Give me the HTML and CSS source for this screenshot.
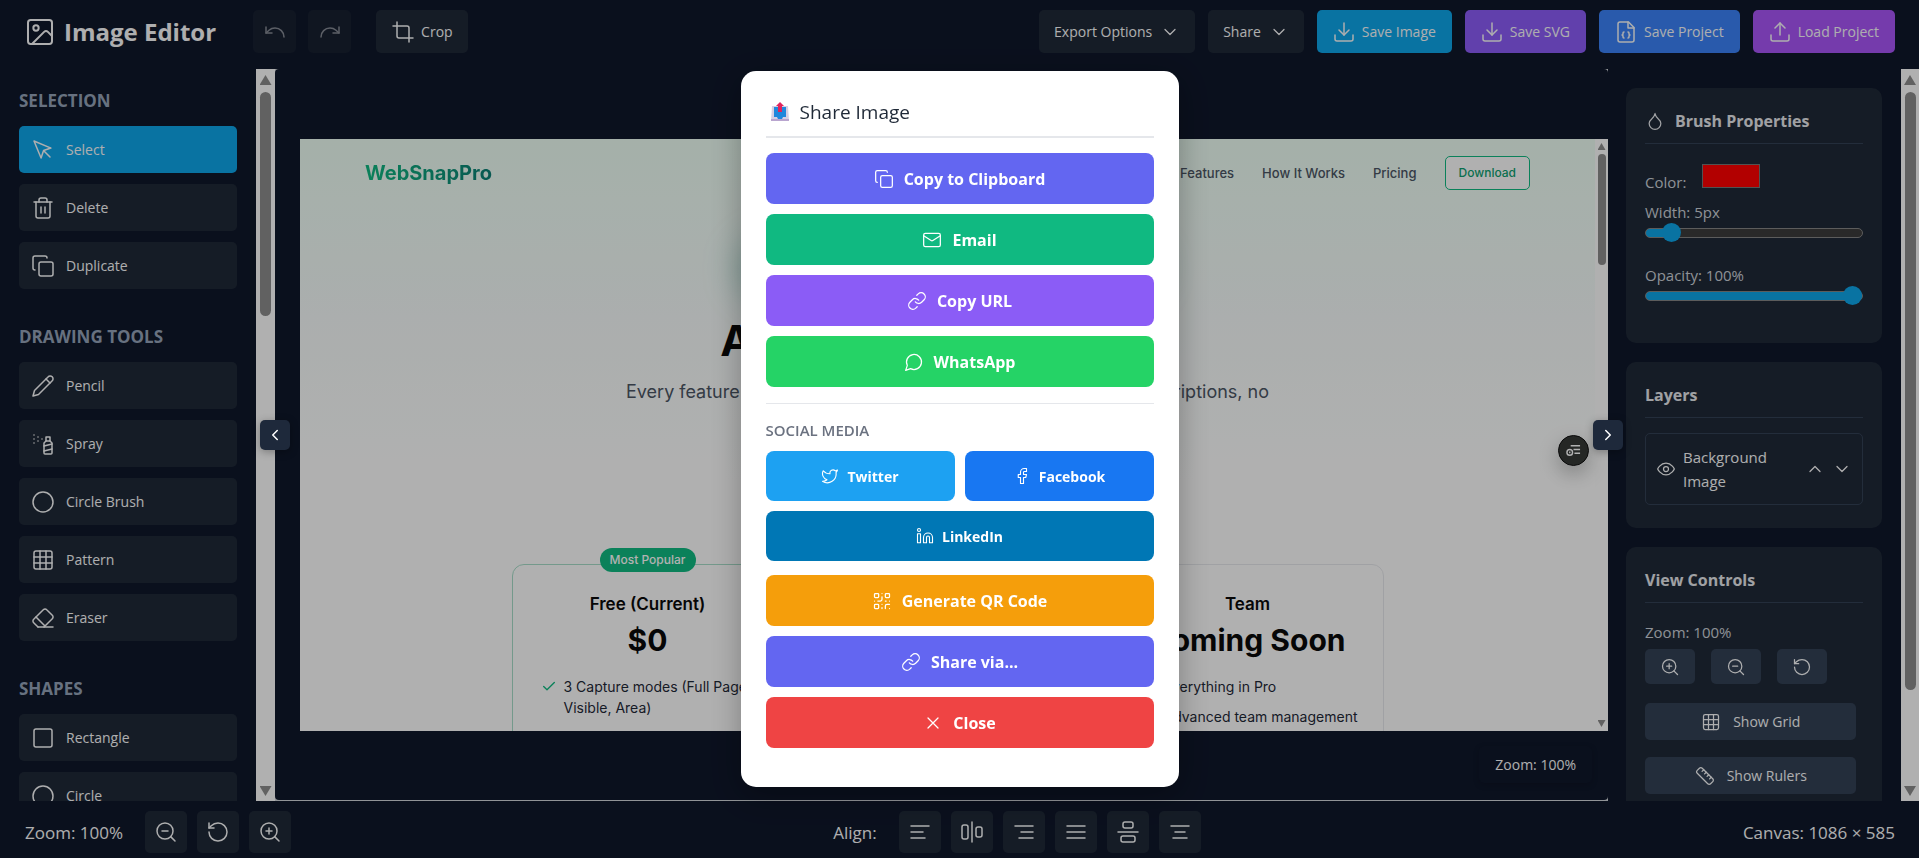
FILE: index.html
```html
<!DOCTYPE html>
<html lang="en">
<head>
    <meta charset="UTF-8">
    <meta name="viewport" content="width=device-width, initial-scale=1.0">
    <title>Image Editor</title>
    <link rel="stylesheet" href="styles.css">
</head>
<body>
    <!-- Icon set -->
    <svg class="sprite" aria-hidden="true">
        <symbol id="i-image" viewBox="0 0 24 24"><rect x="3" y="3" width="18" height="18" rx="2"/><circle cx="9" cy="9" r="2"/><path d="m21 15-3.086-3.086a2 2 0 0 0-2.828 0L6 21"/></symbol>
        <symbol id="i-undo" viewBox="0 0 24 24"><path d="M3 7v6h6"/><path d="M21 17a9 9 0 0 0-9-9 9 9 0 0 0-6 2.3L3 13"/></symbol>
        <symbol id="i-redo" viewBox="0 0 24 24"><path d="M21 7v6h-6"/><path d="M3 17a9 9 0 0 1 9-9 9 9 0 0 1 6 2.3l3 2.7"/></symbol>
        <symbol id="i-crop" viewBox="0 0 24 24"><path d="M6 2v14a2 2 0 0 0 2 2h14"/><path d="M18 22V8a2 2 0 0 0-2-2H2"/></symbol>
        <symbol id="i-down" viewBox="0 0 24 24"><path d="m6 9 6 6 6-6"/></symbol>
        <symbol id="i-up" viewBox="0 0 24 24"><path d="m18 15-6-6-6 6"/></symbol>
        <symbol id="i-left" viewBox="0 0 24 24"><path d="m15 18-6-6 6-6"/></symbol>
        <symbol id="i-right" viewBox="0 0 24 24"><path d="m9 18 6-6-6-6"/></symbol>
        <symbol id="i-download" viewBox="0 0 24 24"><path d="M21 15v4a2 2 0 0 1-2 2H5a2 2 0 0 1-2-2v-4"/><path d="m7 10 5 5 5-5"/><path d="M12 15V3"/></symbol>
        <symbol id="i-upload" viewBox="0 0 24 24"><path d="M21 15v4a2 2 0 0 1-2 2H5a2 2 0 0 1-2-2v-4"/><path d="m17 8-5-5-5 5"/><path d="M12 3v12"/></symbol>
        <symbol id="i-json" viewBox="0 0 24 24"><path d="M14.5 2H6a2 2 0 0 0-2 2v16a2 2 0 0 0 2 2h12a2 2 0 0 0 2-2V7.500L14.5 2z"/><path d="M14 2v6h6"/><path d="M10 12a1 1 0 0 0-1 1v1a1 1 0 0 1-1 1 1 1 0 0 1 1 1v1a1 1 0 0 0 1 1"/><path d="M14 18a1 1 0 0 0 1-1v-1a1 1 0 0 1 1-1 1 1 0 0 1-1-1v-1a1 1 0 0 0-1-1"/></symbol>
        <symbol id="i-pointer" viewBox="0 0 24 24"><path d="m3 3 7.070 16.970 2.510-7.390 7.390-2.510L3 3z"/><path d="m13 13 6 6"/></symbol>
        <symbol id="i-trash" viewBox="0 0 24 24"><path d="M3 6h18"/><path d="M19 6v14a2 2 0 0 1-2 2H7a2 2 0 0 1-2-2V6"/><path d="M8 6V4a2 2 0 0 1 2-2h4a2 2 0 0 1 2 2v2"/><path d="M10 11v6"/><path d="M14 11v6"/></symbol>
        <symbol id="i-copy" viewBox="0 0 24 24"><rect x="8" y="8" width="14" height="14" rx="2"/><path d="M4 16a2 2 0 0 1-2-2V4a2 2 0 0 1 2-2h10a2 2 0 0 1 2 2"/></symbol>
        <symbol id="i-pencil" viewBox="0 0 24 24"><path d="M17 3a2.850 2.830 0 1 1 4 4L7.500 20.500 2 22l1.500-5.500Z"/><path d="m15 5 4 4"/></symbol>
        <symbol id="i-spray" viewBox="0 0 24 24"><path d="M3 3h.01M7 5h.01M11 7h.01M3 7h.01M7 9h.01M3 11h.01"/><rect x="15" y="5" width="4" height="4"/><path d="m19 9 2 2v10c0 .6-.4 1-1 1h-6c-.6 0-1-.4-1-1V11l2-2"/><path d="m13 14 8-2"/><path d="m13 19 8-2"/></symbol>
        <symbol id="i-circle" viewBox="0 0 24 24"><circle cx="12" cy="12" r="10"/></symbol>
        <symbol id="i-square" viewBox="0 0 24 24"><rect x="3" y="3" width="18" height="18" rx="2"/></symbol>
        <symbol id="i-grid" viewBox="0 0 24 24"><rect x="3" y="3" width="18" height="18" rx="2"/><path d="M3 9h18M3 15h18M9 3v18M15 3v18"/></symbol>
        <symbol id="i-eraser" viewBox="0 0 24 24"><path d="m7 21-4.300-4.300c-1-1-1-2.500 0-3.400l9.600-9.600c1-1 2.500-1 3.400 0l5.600 5.600c1 1 1 2.500 0 3.400L13 21"/><path d="M22 21H7"/><path d="m5 11 9 9"/></symbol>
        <symbol id="i-zoom-out" viewBox="0 0 24 24"><circle cx="11" cy="11" r="8"/><path d="m21 21-4.350-4.350"/><path d="M8 11h6"/></symbol>
        <symbol id="i-zoom-in" viewBox="0 0 24 24"><circle cx="11" cy="11" r="8"/><path d="m21 21-4.350-4.350"/><path d="M8 11h6M11 8v6"/></symbol>
        <symbol id="i-reset" viewBox="0 0 24 24"><path d="M3 12a9 9 0 1 0 9-9 9.750 9.750 0 0 0-6.740 2.740L3 8"/><path d="M3 3v5h5"/></symbol>
        <symbol id="i-drop" viewBox="0 0 24 24"><path d="M12 22a7 7 0 0 0 7-7c0-2-1-3.900-3-5.500s-3.500-4-4-6.500c-.5 2.500-2 4.900-4 6.500C6 11.100 5 13 5 15a7 7 0 0 0 7 7z"/></symbol>
        <symbol id="i-eye" viewBox="0 0 24 24"><path d="M2 12s3-7 10-7 10 7 10 7-3 7-10 7-10-7-10-7Z"/><circle cx="12" cy="12" r="3"/></symbol>
        <symbol id="i-ruler" viewBox="0 0 24 24"><path d="M21.3 15.3a2.400 2.400 0 0 1 0 3.400l-2.600 2.600a2.400 2.400 0 0 1-3.400 0L2.700 8.700a2.410 2.410 0 0 1 0-3.400l2.600-2.600a2.410 2.410 0 0 1 3.400 0Z"/><path d="m14.5 12.5 2-2M11.5 9.500l2-2M8.500 6.500l2-2M17.5 15.5l2-2"/></symbol>
        <symbol id="i-mail" viewBox="0 0 24 24"><rect x="2" y="4" width="20" height="16" rx="2"/><path d="m22 7-8.970 5.700a1.940 1.940 0 0 1-2.060 0L2 7"/></symbol>
        <symbol id="i-link" viewBox="0 0 24 24"><path d="M10 13a5 5 0 0 0 7.540.54l3-3a5 5 0 0 0-7.070-7.070l-1.720 1.710"/><path d="M14 11a5 5 0 0 0-7.540-.54l-3 3a5 5 0 0 0 7.070 7.070l1.710-1.710"/></symbol>
        <symbol id="i-chat" viewBox="0 0 24 24"><path d="M7.900 20A9 9 0 1 0 4 16.100L2 22Z"/></symbol>
        <symbol id="i-twitter" viewBox="0 0 24 24"><path d="M22 4s-.7 2.100-2 3.400c1.600 10-9.400 17.300-18 11.600 2.200.1 4.400-.6 6-2C3 15.500.5 9.600 3 5c2.200 2.600 5.600 4.100 9 4-.9-4.200 4-6.600 7-3.800 1.100 0 3-1.200 3-1.200z"/></symbol>
        <symbol id="i-facebook" viewBox="0 0 24 24"><path d="M18 2h-3a5 5 0 0 0-5 5v3H7v4h3v8h4v-8h3l1-4h-4V7a1 1 0 0 1 1-1h3z"/></symbol>
        <symbol id="i-linkedin" viewBox="0 0 24 24"><path d="M16 8a6 6 0 0 1 6 6v7h-4v-7a2 2 0 0 0-4 0v7h-4v-7a6 6 0 0 1 6-6z"/><rect x="2" y="9" width="4" height="12"/><circle cx="4" cy="4" r="2"/></symbol>
        <symbol id="i-qr" viewBox="0 0 24 24"><rect x="3" y="3" width="5" height="5" rx="1"/><rect x="16" y="3" width="5" height="5" rx="1"/><rect x="3" y="16" width="5" height="5" rx="1"/><path d="M21 16h-3a2 2 0 0 0-2 2v3M21 21v.01M12 7v3a2 2 0 0 1-2 2H7M3 12h.01M12 3h.01M12 16v.01M16 12h1M21 12v.01M12 21v-1"/></symbol>
        <symbol id="i-x" viewBox="0 0 24 24"><path d="M18 6 6 18M6 6l12 12"/></symbol>
        <symbol id="i-check" viewBox="0 0 24 24"><path d="M20 6 9 17l-5-5"/></symbol>
        <symbol id="i-al-left" viewBox="0 0 24 24"><path d="M3 6h18M3 12h12M3 18h14"/></symbol>
        <symbol id="i-al-right" viewBox="0 0 24 24"><path d="M3 6h18M9 12h12M7 18h14"/></symbol>
        <symbol id="i-al-justify" viewBox="0 0 24 24"><path d="M3 6h18M3 12h18M3 18h18"/></symbol>
        <symbol id="i-al-center" viewBox="0 0 24 24"><path d="M3 6h18M7 12h10M5 18h14"/></symbol>
        <symbol id="i-al-h" viewBox="0 0 24 24"><rect x="2" y="5" width="6" height="14" rx="2"/><rect x="16" y="7" width="6" height="10" rx="2"/><path d="M12 2v20"/></symbol>
        <symbol id="i-al-v" viewBox="0 0 24 24"><rect x="5" y="16" width="14" height="6" rx="2"/><rect x="7" y="2" width="10" height="6" rx="2"/><path d="M2 12h20"/></symbol>
    </svg>

    <header class="topbar">
        <h1 class="brand"><svg class="icon brand-icon"><use href="#i-image"/></svg>Image Editor</h1>
        <div class="history">
            <button class="btn btn-square" disabled aria-label="Undo"><svg class="icon"><use href="#i-undo"/></svg></button>
            <button class="btn btn-square" disabled aria-label="Redo"><svg class="icon"><use href="#i-redo"/></svg></button>
        </div>
        <button class="btn"><svg class="icon"><use href="#i-crop"/></svg>Crop</button>
        <div class="actions">
            <button class="btn btn-menu">Export Options<svg class="icon icon-sm"><use href="#i-down"/></svg></button>
            <button class="btn btn-menu">Share<svg class="icon icon-sm"><use href="#i-down"/></svg></button>
            <button class="btn btn-sky"><svg class="icon"><use href="#i-download"/></svg>Save Image</button>
            <button class="btn btn-violet"><svg class="icon"><use href="#i-download"/></svg>Save SVG</button>
            <button class="btn btn-blue"><svg class="icon"><use href="#i-json"/></svg>Save Project</button>
            <button class="btn btn-purple"><svg class="icon"><use href="#i-upload"/></svg>Load Project</button>
        </div>
    </header>

    <main class="workspace">
        <aside class="sidebar">
            <div class="tools">
                <section class="tool-group">
                    <h2>SELECTION</h2>
                    <button class="tool active"><svg class="icon"><use href="#i-pointer"/></svg>Select</button>
                    <button class="tool"><svg class="icon"><use href="#i-trash"/></svg>Delete</button>
                    <button class="tool"><svg class="icon"><use href="#i-copy"/></svg>Duplicate</button>
                </section>
                <section class="tool-group">
                    <h2>DRAWING TOOLS</h2>
                    <button class="tool"><svg class="icon"><use href="#i-pencil"/></svg>Pencil</button>
                    <button class="tool"><svg class="icon"><use href="#i-spray"/></svg>Spray</button>
                    <button class="tool"><svg class="icon"><use href="#i-circle"/></svg>Circle Brush</button>
                    <button class="tool"><svg class="icon"><use href="#i-grid"/></svg>Pattern</button>
                    <button class="tool"><svg class="icon"><use href="#i-eraser"/></svg>Eraser</button>
                </section>
                <section class="tool-group">
                    <h2>SHAPES</h2>
                    <button class="tool"><svg class="icon"><use href="#i-square"/></svg>Rectangle</button>
                    <button class="tool"><svg class="icon"><use href="#i-circle"/></svg>Circle</button>
                </section>
            </div>
            <div class="scrollbar"><i class="arrow-up"></i><i class="thumb thumb-left"></i><i class="arrow-down"></i></div>
        </aside>

        <div class="stage">
            <button class="toggle toggle-left" aria-label="Hide tools"><svg class="icon"><use href="#i-left"/></svg></button>
            <button class="toggle toggle-right" aria-label="Hide properties"><svg class="icon"><use href="#i-right"/></svg></button>
            <div class="canvas">
                <!-- Loaded picture -->
                <div class="snap">
                    <div class="snap-page">
                        <div class="snap-glow"></div>
                        <div class="snap-nav">
                            <strong class="snap-logo">WebSnapPro</strong>
                            <span>Features</span>
                            <span>How It Works</span>
                            <span>Pricing</span>
                            <span class="snap-download">Download</span>
                        </div>
                        <div class="snap-title">All Features, One App</div>
                        <p class="snap-lead">Every feature you need to capture and share it. No hidden subscriptions, no</p>
                        <div class="plans">
                            <div class="plan plan-free">
                                <span class="plan-badge">Most Popular</span>
                                <h3>Free (Current)</h3>
                                <div class="price">$0</div>
                                <ul>
                                    <li><svg class="icon"><use href="#i-check"/></svg>3 Capture modes (Full Page, Visible, Area)</li>
                                </ul>
                            </div>
                            <div class="plan">
                                <h3>Pro</h3>
                            </div>
                            <div class="plan">
                                <h3>Team</h3>
                                <div class="price">Coming Soon</div>
                                <ul>
                                    <li><svg class="icon"><use href="#i-check"/></svg>Everything in Pro</li>
                                    <li><svg class="icon"><use href="#i-check"/></svg>Advanced team management</li>
                                </ul>
                            </div>
                        </div>
                    </div>
                    <div class="scrollbar scrollbar-thin"><i class="arrow-up"></i><i class="thumb thumb-snap"></i><i class="arrow-down"></i></div>
                    <div class="snap-fab">
                        <svg viewBox="0 0 16 16"><path d="M5 3h10M8 7h7M9 11h6"/><circle cx="4" cy="10" r="3"/><path d="M4 9v2"/></svg>
                    </div>
                </div>
                <div class="zoom-tag">Zoom: 100%</div>
            </div>
        </div>

        <aside class="props">
            <div class="cards">
                <section class="card">
                    <h3><svg class="icon icon-sm"><use href="#i-drop"/></svg>Brush Properties</h3>
                    <div class="color-row">
                        <label for="color">Color:</label>
                        <input type="color" id="color" value="#ff0000">
                    </div>
                    <div class="field">
                        <label for="width">Width: 5px</label>
                        <input type="range" id="width" class="range-width" min="1" max="50" value="5">
                    </div>
                    <div class="field">
                        <label for="opacity">Opacity: 100%</label>
                        <input type="range" id="opacity" class="range-opacity" min="0" max="100" value="100">
                    </div>
                </section>
                <section class="card">
                    <h3>Layers</h3>
                    <div class="layer">
                        <svg class="icon icon-sm"><use href="#i-eye"/></svg>
                        <span>Background Image</span>
                        <button aria-label="Move up"><svg class="icon icon-sm"><use href="#i-up"/></svg></button>
                        <button aria-label="Move down"><svg class="icon icon-sm"><use href="#i-down"/></svg></button>
                    </div>
                </section>
                <section class="card">
                    <h3>View Controls</h3>
                    <div class="view-label">Zoom: 100%</div>
                    <div class="view-zoom">
                        <button aria-label="Zoom in"><svg class="icon icon-sm"><use href="#i-zoom-in"/></svg></button>
                        <button aria-label="Zoom out"><svg class="icon icon-sm"><use href="#i-zoom-out"/></svg></button>
                        <button aria-label="Reset zoom"><svg class="icon icon-sm"><use href="#i-reset"/></svg></button>
                    </div>
                    <button class="view-btn"><svg class="icon icon-sm"><use href="#i-grid"/></svg>Show Grid</button>
                    <button class="view-btn"><svg class="icon icon-sm"><use href="#i-ruler"/></svg>Show Rulers</button>
                </section>
            </div>
            <div class="scrollbar"><i class="arrow-up"></i><i class="thumb thumb-right"></i><i class="arrow-down"></i></div>
        </aside>
    </main>

    <footer class="statusbar">
        <div class="status-group">
            <span class="status-zoom">Zoom: 100%</span>
            <button aria-label="Zoom out"><svg class="icon"><use href="#i-zoom-out"/></svg></button>
            <button aria-label="Reset zoom"><svg class="icon"><use href="#i-reset"/></svg></button>
            <button aria-label="Zoom in"><svg class="icon"><use href="#i-zoom-in"/></svg></button>
        </div>
        <div class="status-group">
            <span class="status-align">Align:</span>
            <button aria-label="Align left"><svg class="icon"><use href="#i-al-left"/></svg></button>
            <button aria-label="Align center"><svg class="icon"><use href="#i-al-h"/></svg></button>
            <button aria-label="Align right"><svg class="icon"><use href="#i-al-right"/></svg></button>
            <button aria-label="Align top"><svg class="icon"><use href="#i-al-justify"/></svg></button>
            <button aria-label="Align middle"><svg class="icon"><use href="#i-al-v"/></svg></button>
            <button aria-label="Align bottom"><svg class="icon"><use href="#i-al-center"/></svg></button>
        </div>
        <span>Canvas: 1086 × 585</span>
    </footer>

    <div class="overlay">
        <div class="modal" role="dialog" aria-labelledby="share-title">
            <h2 id="share-title">
                <svg class="tray" viewBox="0 0 20 20"><path fill="#d5cfe4" d="M2 4h16l1 15H1z"/><path fill="#b9a5cf" d="M1 17h18v2H1z"/><path fill="#1f87dc" d="M4 5h12v10h-3l-1 2H8l-1-2H4z"/><path fill="#e0245e" d="m10 0 4 4h-2v6H8V4H6z"/></svg>
                Share Image
            </h2>
            <button class="share s-indigo"><svg class="icon"><use href="#i-copy"/></svg>Copy to Clipboard</button>
            <button class="share s-green"><svg class="icon"><use href="#i-mail"/></svg>Email</button>
            <button class="share s-violet"><svg class="icon"><use href="#i-link"/></svg>Copy URL</button>
            <button class="share s-whatsapp"><svg class="icon"><use href="#i-chat"/></svg>WhatsApp</button>
            <div class="social">
                <h3>SOCIAL MEDIA</h3>
                <div class="social-grid">
                    <button class="share s-twitter"><svg class="icon"><use href="#i-twitter"/></svg>Twitter</button>
                    <button class="share s-facebook"><svg class="icon"><use href="#i-facebook"/></svg>Facebook</button>
                    <button class="share s-linkedin"><svg class="icon"><use href="#i-linkedin"/></svg>LinkedIn</button>
                </div>
            </div>
            <button class="share s-amber"><svg class="icon"><use href="#i-qr"/></svg>Generate QR Code</button>
            <button class="share s-indigo"><svg class="icon"><use href="#i-link"/></svg>Share via...</button>
            <button class="share s-red"><svg class="icon"><use href="#i-x"/></svg>Close</button>
        </div>
    </div>
</body>
</html>
```
FILE: styles.css
```css
* {
    box-sizing: border-box;
}

body {
    display: flex;
    flex-direction: column;
    height: 100vh;
    margin: 0;
    overflow: hidden;
    background-color: #0f172a;
    color: #f9fafb;
    font-family: "Open Sans", "Noto Sans", sans-serif;
    font-size: 15px;
}

h1, h2, h3, p, ul {
    margin: 0;
    padding: 0;
}

button {
    display: flex;
    align-items: center;
    justify-content: center;
    border: none;
    border-radius: 5px;
    background-color: #1f2937;
    color: inherit;
    font-family: inherit;
    font-size: 15px;
    cursor: pointer;
}

.sprite {
    display: none;
}

.icon {
    flex: none;
    width: 24px;
    height: 24px;
    fill: none;
    stroke: currentColor;
    stroke-width: 1.5;
    stroke-linecap: round;
    stroke-linejoin: round;
}

.icon-sm {
    width: 20px;
    height: 20px;
}

/* Top bar */
.topbar {
    display: flex;
    align-items: center;
    height: 69px;
    padding: 0 24px 6px;
}

.brand {
    display: flex;
    align-items: center;
    gap: 8px;
    font-size: 24px;
    font-weight: 700;
}

.brand-icon {
    width: 32px;
    height: 32px;
}

.history {
    display: flex;
    gap: 12px;
    margin: 0 25px 0 37px;
}

.btn {
    gap: 6px;
    height: 43px;
    padding: 0 15px;
    font-size: 14px;
}

.btn-square {
    width: 43px;
    padding: 0;
}

.btn:disabled {
    color: #f9fafb;
    opacity: 0.5;
}

.btn-menu {
    gap: 8px;
}

.btn-sky, .btn-violet, .btn-blue, .btn-purple {
    padding: 0 16px 0 15px;
}

.btn-sky {
    background-color: #0ea5e9;
}

.btn-violet {
    background-color: #8b5cf6;
}

.btn-blue {
    background-color: #3b82f6;
}

.btn-purple {
    background-color: #a855f7;
}

.actions {
    display: flex;
    gap: 13px;
    margin-left: auto;
}

/* Workspace */
.workspace {
    display: flex;
    flex: 1;
    min-height: 0;
}

.sidebar {
    display: flex;
    width: 275px;
}

.tools {
    flex: 1;
    overflow: hidden;
    padding: 20px 19px 0;
}

.tool-group {
    display: flex;
    flex-direction: column;
    gap: 11px;
    margin-bottom: 36px;
}

.tool-group h2 {
    margin-bottom: 2px;
    color: #94a3b8;
    font-size: 17px;
    font-weight: 700;
    line-height: 24px;
}

.tool {
    justify-content: flex-start;
    gap: 11px;
    height: 47px;
    padding: 0 12px;
    font-size: 14px;
}

.tool.active {
    background-color: #0ea5e9;
}

/* Scrollbars */
.scrollbar {
    display: flex;
    flex-direction: column;
    align-items: center;
    width: 19px;
    padding: 6px 0 5px;
    background-color: #fcfcfc;
}

.arrow-up, .arrow-down {
    width: 12px;
    height: 10px;
    background-color: #8b8b8b;
    clip-path: polygon(50% 0, 100% 100%, 0 100%);
}

.arrow-down {
    margin-top: auto;
    clip-path: polygon(0 0, 100% 0, 50% 100%);
}

.thumb {
    width: 11px;
    margin-top: 7px;
    border-radius: 6px;
    background-color: #8b8b8b;
}

.thumb-left {
    height: 31%;
}

.thumb-right {
    height: 83%;
}

.scrollbar-thin {
    width: 13px;
    padding: 4px 0;
}

.scrollbar-thin .arrow-up, .scrollbar-thin .arrow-down {
    width: 8px;
    height: 7px;
}

.scrollbar-thin .thumb {
    width: 8px;
    margin-top: 4px;
}

.thumb-snap {
    height: 19%;
}

/* Stage */
.stage {
    position: relative;
    flex: 1;
    min-width: 0;
    padding-bottom: 1px;
    background-color: #d0d4d8;
}

.canvas {
    position: relative;
    display: flex;
    height: 100%;
    padding: 70px 0 69px 25px;
    border-radius: 4px;
    background-color: #0f172a;
}

.toggle {
    position: absolute;
    top: calc(50% - 15px);
    z-index: 20;
    width: 30px;
    height: 30px;
    padding: 0;
    background-color: #1e293b;
    color: #fff;
    box-shadow: 0 2px 8px rgba(0, 0, 0, 0.3);
}

.toggle .icon {
    width: 18px;
    height: 18px;
    stroke-width: 2;
}

.toggle-left {
    left: -15px;
}

.toggle-right {
    right: -15px;
}

.zoom-tag {
    position: absolute;
    right: 16px;
    bottom: 17px;
    padding: 8px 16px;
    border-radius: 5px;
    background-color: rgba(15, 23, 42, 0.9);
    box-shadow: 0 2px 6px rgba(0, 0, 0, 0.15);
    font-size: 14px;
    line-height: 21px;
}

/* Picture on the canvas */
.snap {
    position: relative;
    display: flex;
    flex: 1;
    overflow: hidden;
    background: linear-gradient(#ecfdf3, #f5faf9 30%, #fdfdfd 58%);
    color: #0a0a0a;
    font-family: Inter, sans-serif;
    font-size: 14px;
}

.snap-page {
    position: relative;
    flex: 1;
    text-align: center;
}

.snap-glow {
    position: absolute;
    top: 70px;
    left: 50%;
    width: 420px;
    height: 120px;
    margin-left: -210px;
    border-radius: 50%;
    background-color: rgba(20, 150, 130, 0.35);
    filter: blur(18px);
}

.snap-nav {
    display: flex;
    align-items: center;
    gap: 28px;
    height: 68px;
    padding: 0 65px;
    color: #4b5563;
    font-size: 13px;
    font-weight: 500;
}

.snap-logo {
    margin-right: auto;
    background: linear-gradient(90deg, #10b981, #0d7f75);
    background-clip: text;
    color: transparent;
    font-size: 20px;
    font-weight: 700;
}

.snap-download {
    padding: 8px 13px;
    border: 1px solid #10b981;
    border-radius: 5px;
    background-color: #fdfdfd;
    color: #0f9f70;
    font-size: 12px;
    line-height: 16px;
}

.snap-title {
    margin-top: 107px;
    font-size: 43px;
    font-weight: 700;
    line-height: 52px;
}

.snap-lead {
    margin-top: 12px;
    color: #4b5563;
    font-size: 18px;
    line-height: 28px;
}

.plans {
    display: grid;
    grid-template-columns: repeat(3, 272px);
    justify-content: center;
    gap: 28px;
    margin-top: 158px;
}

.plan {
    position: relative;
    height: 300px;
    padding: 27px 28px;
    border: 1px solid #e5e7eb;
    border-radius: 12px;
    background-color: #fdfdfd;
}

.plan-free {
    border-color: #a7dcc8;
}

.plan-badge {
    position: absolute;
    top: -17px;
    left: 50%;
    width: 96px;
    margin-left: -48px;
    border-radius: 12px;
    background-color: #10b981;
    color: #fff;
    font-size: 12px;
    font-weight: 500;
    line-height: 24px;
}

.plan h3 {
    font-size: 17px;
    font-weight: 600;
    line-height: 24px;
}

.price {
    margin-top: 4px;
    font-size: 30px;
    font-weight: 700;
    line-height: 40px;
}

.plan ul {
    margin-top: 16px;
    color: #1f2937;
    text-align: left;
    line-height: 21px;
    list-style: none;
}

.plan li {
    display: flex;
    gap: 7px;
    width: 220px;
    margin-bottom: 9px;
}

.plan .icon {
    width: 16px;
    height: 21px;
    color: #10b981;
    stroke-width: 2;
}

.snap-fab {
    position: absolute;
    right: 19px;
    bottom: 265px;
    display: flex;
    align-items: center;
    justify-content: center;
    width: 31px;
    height: 31px;
    border: 1px solid #111;
    border-radius: 50%;
    background-color: #353836;
    box-shadow: 0 8px 20px rgba(0, 0, 0, 0.25);
}

.snap-fab svg {
    width: 15px;
    height: 15px;
    fill: none;
    stroke: #fff;
    stroke-width: 1.5;
}

/* Properties */
.props {
    display: flex;
    width: 311px;
}

.props .scrollbar {
    width: 18px;
}

.cards {
    flex: 1;
    overflow: hidden;
    padding: 19px 19px 0 18px;
}

.card {
    margin-bottom: 19px;
    padding: 19px 19px 16px;
    border-radius: 10px;
    background-color: #1f2937;
    color: #cbd0d8;
}

.card h3 {
    display: flex;
    align-items: center;
    gap: 10px;
    margin-bottom: 15px;
    padding-bottom: 8px;
    border-bottom: 1px solid #334155;
    color: #e5e7eb;
    font-size: 16px;
    font-weight: 700;
    line-height: 28px;
}

.color-row {
    display: flex;
    align-items: flex-start;
    gap: 16px;
    margin-bottom: 8px;
    padding-top: 5px;
}

.color-row label {
    margin-top: 7px;
    line-height: 22px;
}

input[type="color"] {
    width: 58px;
    height: 24px;
    padding: 0;
    border: 1px solid #767676;
    background: none;
}

input[type="color"]::-webkit-color-swatch-wrapper {
    padding: 0;
}

input[type="color"]::-webkit-color-swatch {
    border: none;
}

.field {
    margin-bottom: 19px;
    line-height: 22px;
}

.field label {
    display: block;
}

input[type="range"] {
    display: block;
    width: 100%;
    height: 20px;
    margin: 0 0 21px;
    background: none;
    appearance: none;
}

input[type="range"]::-webkit-slider-runnable-track {
    height: 10px;
    border: 1px solid #858585;
    border-radius: 5px;
    background-color: #3b3b3b;
}

.range-width::-webkit-slider-runnable-track {
    background-image: linear-gradient(90deg, #0ea5e9 12%, transparent 12%);
}

.range-opacity::-webkit-slider-runnable-track {
    background-image: linear-gradient(#0ea5e9, #0ea5e9);
}

input[type="range"]::-webkit-slider-thumb {
    width: 19px;
    height: 19px;
    margin-top: -6px;
    border-radius: 50%;
    background-color: #0ea5e9;
    appearance: none;
}

.layer {
    display: flex;
    align-items: center;
    gap: 7px;
    margin-bottom: 7px;
    padding: 11px 10px;
    border: 1px solid #334155;
    border-radius: 5px;
    color: #f9fafb;
    line-height: 24px;
}

.layer span {
    flex: 1;
}

.layer button {
    padding: 0;
    background: none;
}

.view-label {
    padding-top: 3px;
    line-height: 22px;
}

.view-zoom {
    display: flex;
    gap: 16px;
    margin: 6px 0 19px;
}

.view-zoom button {
    width: 50px;
    height: 35px;
    background-color: #334155;
    color: #f9fafb;
}

.view-btn {
    gap: 12px;
    width: 97%;
    height: 37px;
    margin-bottom: 17px;
    background-color: #334155;
    color: #f9fafb;
    font-size: 14px;
}

/* Status bar */
.statusbar {
    display: flex;
    align-items: center;
    justify-content: space-between;
    padding: 10px 24px 5px 25px;
    font-size: 17px;
}

.status-group {
    display: flex;
    align-items: center;
    gap: 10px;
}

.status-group button {
    width: 42px;
    height: 42px;
    padding: 0;
}

.status-zoom, .status-align {
    margin-right: 12px;
}

/* Share dialog */
.overlay {
    position: fixed;
    inset: 0;
    z-index: 10;
    display: flex;
    align-items: center;
    justify-content: center;
    background-color: rgba(0, 0, 0, 0.3);
}

.modal {
    display: flex;
    flex-direction: column;
    gap: 10px;
    width: 438px;
    padding: 25px 25px 39px;
    border-radius: 15px;
    background-color: #fff;
    box-shadow: 0 8px 32px rgba(0, 0, 0, 0.3);
}

.modal h2 {
    display: flex;
    align-items: center;
    gap: 10px;
    margin-bottom: 5px;
    padding: 0 4px 8px;
    border-bottom: 2px solid #e5e7eb;
    color: #1f2937;
    font-size: 19px;
    font-weight: 500;
    line-height: 32px;
}

.tray {
    width: 20px;
    height: 20px;
}

.share {
    gap: 10px;
    height: 51px;
    border-radius: 8px;
    color: #fff;
    font-size: 16px;
    font-weight: 700;
}

.share .icon {
    width: 20px;
    height: 20px;
}

.social {
    margin: 6px 0 4px;
    padding-top: 16px;
    border-top: 1px solid #e5e7eb;
}

.social h3 {
    margin-bottom: 11px;
    color: #6b7280;
    font-size: 15px;
    font-weight: 600;
    line-height: 20px;
}

.social-grid {
    display: grid;
    grid-template-columns: 1fr 1fr;
    gap: 10px;
}

.social .share {
    gap: 8px;
    height: 50px;
    font-size: 14px;
}

.social .icon {
    width: 18px;
    height: 18px;
}

.s-indigo {
    background-color: #6366f1;
}

.s-green {
    background-color: #10b981;
}

.s-violet {
    background-color: #8b5cf6;
}

.s-whatsapp {
    background-color: #25d366;
}

.s-twitter {
    background-color: #1da1f2;
}

.s-facebook {
    background-color: #1877f2;
}

.s-linkedin {
    grid-column: span 2;
    background-color: #0077b5;
}

.s-amber {
    background-color: #f59e0b;
}

.s-red {
    background-color: #ef4444;
}
```
